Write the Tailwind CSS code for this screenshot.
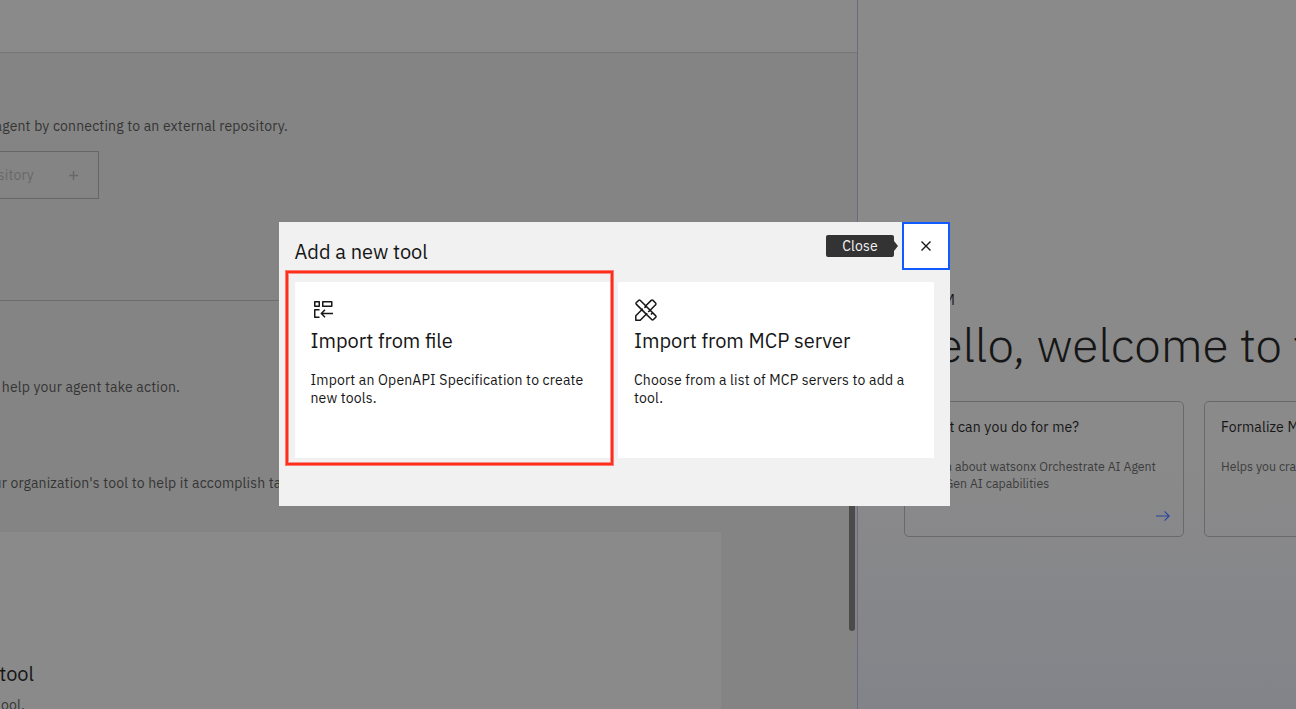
<!DOCTYPE html>
<html lang="en">
<head>
<meta charset="utf-8">
<title>Add a new tool</title>
<script src="https://cdn.jsdelivr.net/npm/@tailwindcss/browser@4"></script>
</head>
<body class="relative flex h-[709px] w-[1296px] overflow-hidden bg-[#8a8a8a] font-['IBM_Plex_Sans',Roboto,sans-serif] text-sm text-[#161616]">

<!-- Agent builder -->
<main class="relative flex w-[858px] shrink-0 flex-col border-r border-[#6b698a] bg-[#848484] text-[#353535]">
  <header class="h-[53px] shrink-0 border-b border-[#767676] bg-[#8a8a8a]"></header>
  <section class="flex h-[248px] shrink-0 flex-col border-b border-[#6c6c6c] pt-[64px]">
    <p class="flex w-[288px] justify-end whitespace-nowrap leading-[18px] tracking-[0.16px]">agent by connecting to an external repository.</p>
    <button class="mt-4 flex h-12 w-[99px] items-center justify-end border border-l-0 border-[#666] pr-5 text-[#686868]">
      <span class="shrink-0 tracking-[0.16px]">sitory</span>
      <svg class="ml-[35px] shrink-0" width="9" height="9" viewBox="0 0 9 9" fill="none" stroke="currentColor" stroke-width="1.4"><path d="M4.5 0v9M0 4.5h9"/></svg>
    </button>
  </section>
  <section class="flex flex-col pt-[77px]">
    <p class="flex w-[180px] justify-end whitespace-nowrap leading-[18px] tracking-[0.16px]">help your agent take action.</p>
    <p class="mt-[78px] flex w-[296px] justify-end whitespace-nowrap leading-[18px] tracking-[0.16px]">ur organization's tool to help it accomplish task</p>
    <div class="mt-10 h-[177px] w-[721px] overflow-hidden bg-[#8a8a8a] pt-[129px]">
      <h2 class="flex w-[34px] justify-end text-xl leading-[26px] text-[#161616]">tool</h2>
      <p class="mt-[9px] flex w-[25px] justify-end leading-[18px] tracking-[0.16px]">ool.</p>
    </div>
  </section>
  <div class="absolute top-[400px] right-[2px] h-[231px] w-1.5 rounded-full bg-[#4b4b4b]"></div>
</main>

<!-- Chat preview -->
<aside class="flex w-[438px] shrink-0 flex-col overflow-hidden bg-linear-to-b from-[#8a8a8a] from-65% to-[#83848a] pt-[291px] pl-[46px]">
  <p class="w-[51px] text-right leading-[18px]">PM</p>
  <h1 class="mt-[7px] -ml-px w-[500px] text-5xl leading-[56px] font-light tracking-[-0.08px] whitespace-nowrap">Hello, welcome to the</h1>
  <div class="mt-[29px] flex gap-5">
    <article class="flex h-[136px] w-[280px] shrink-0 flex-col rounded-[5px] border border-[#696969] px-4 pt-4">
      <h3 class="w-[158px] self-start text-right leading-[18px] tracking-[0.16px] whitespace-nowrap">What can you do for me?</h3>
      <p class="mt-[22px] text-[12.35px] leading-[17px] whitespace-nowrap text-[#3c3c3c]">Learn about watsonx Orchestrate AI Agent<br>and Gen AI capabilities</p>
      <svg class="mt-[18px] -mr-[4px] self-end" width="16" height="12" viewBox="0 0 16 12" fill="none" stroke="#24479c" stroke-width="1.1"><path d="M1 6h13M9.5 1.3 14.2 6 9.5 10.7"/></svg>
    </article>
    <article class="flex h-[136px] w-[280px] shrink-0 flex-col rounded-[5px] border border-[#696969] px-4 pt-4">
      <h3 class="leading-[18px] tracking-[0.16px]">Formalize My</h3>
      <p class="mt-[22px] text-[12.35px] leading-[17px] text-[#3c3c3c]">Helps you craft</p>
    </article>
  </div>
</aside>

<!-- Dialog -->
<div role="dialog" class="absolute top-[222px] left-[279px] flex h-[284px] w-[671px] flex-col bg-[#f1f1f1]">
  <div class="flex h-[60px] shrink-0 justify-between pl-[15.5px]">
    <h2 class="pt-[17px] text-xl leading-[26px]">Add a new tool</h2>
    <div class="flex">
      <div class="mt-[13px] flex h-[22px] w-[68px] items-center justify-center rounded-[2px] bg-[#333] tracking-[0.16px] text-[#f4f4f4]">Close</div>
      <svg class="mt-[19px] mr-1" width="4" height="10" viewBox="0 0 4 10"><path d="M0 0 4 5 0 10z" fill="#333"/></svg>
      <button class="flex size-12 items-center justify-center border-2 border-[#0f5bff] bg-white" aria-label="Close">
        <svg width="10" height="10" viewBox="0 0 10 10" fill="none" stroke="#161616" stroke-width="1.4"><path d="m.5.5 9 9M9.5.5l-9 9"/></svg>
      </button>
    </div>
  </div>
  <div class="flex gap-[7px] pl-4">
    <article class="flex h-[176px] w-[316px] flex-col bg-white pt-4 pl-[15.5px]">
      <svg class="ml-[1.5px]" width="24" height="24" viewBox="0 0 24 24" fill="none" stroke="#161616" stroke-width="1.5" stroke-linejoin="round"><path d="M2.75 3.75h4.5v4.5h-4.5zM10.75 3.75h9v4.5h-9zM7.5 11.75H2.75v7.5H7.5M21 15.5H9.5M13 11.8 9.3 15.5l3.7 3.7"/></svg>
      <h3 class="mt-1.5 text-xl leading-[26px]">Import from file</h3>
      <p class="mt-[17px] leading-[18px] tracking-[0.16px] whitespace-nowrap">Import an OpenAPI Specification to create<br>new tools.</p>
    </article>
    <article class="flex h-[176px] w-[316px] flex-col bg-white pt-4 pl-4">
      <svg width="24" height="24" viewBox="0 0 24 24" fill="none" stroke="#161616" stroke-width="1.5" stroke-linejoin="round"><path d="M9.2 13.1 2.2 6.1a1 1 0 0 1 0-1.3L4.8 2.2a1 1 0 0 1 1.3 0L21.8 17.9a1 1 0 0 1 0 1.3l-2.6 2.6a1 1 0 0 1-1.3 0L9.2 13.1M8.8 10.8 1.8 17.8v4.4h4.4l7-7M10.8 8.8l6.4-6.4a1.3 1.3 0 0 1 1.8 0l2.6 2.6a1.3 1.3 0 0 1 0 1.8l-6.4 6.4M12.3 8.3 10.5 10M16 12.2l-1.8 1.8M18.6 14.8l-1.7 1.7"/></svg>
      <h3 class="mt-1.5 text-xl leading-[26px]">Import from MCP server</h3>
      <p class="mt-[17px] leading-[18px] tracking-[0.16px] whitespace-nowrap">Choose from a list of MCP servers to add a<br>tool.</p>
    </article>
  </div>
</div>

<!-- Highlight frame -->
<div class="pointer-events-none absolute top-[271px] left-[286px] h-[194px] w-[327px] border-2 border-[#ff2d1c] outline-1 outline-[#ff2d1c]/60 inset-shadow-[0_0_0_1px] inset-shadow-[#ff2d1c]/50"></div>
</body>
</html>
